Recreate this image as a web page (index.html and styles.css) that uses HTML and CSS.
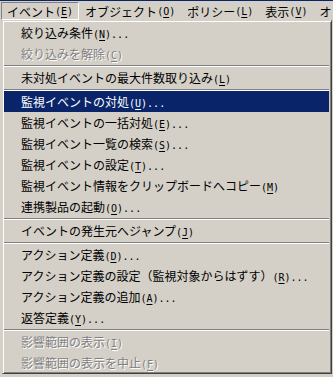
FILE: index.html
```html
<!DOCTYPE html>
<html lang="ja">
<head>
    <meta charset="UTF-8">
    <title>イベント</title>
    <link rel="stylesheet" href="styles.css">
</head>
<body>
    <div class="menubar">
        <span class="top-item pressed">イベント<span class="k">(<u>E</u>)</span></span>
        <span class="top-item">オブジェクト<span class="k">(<u>O</u>)</span></span>
        <span class="top-item">ポリシー<span class="k">(<u>L</u>)</span></span>
        <span class="top-item">表示<span class="k">(<u>V</u>)</span></span>
        <span class="top-item">オ</span>
    </div>

    <div class="dropdown">
        <div class="item">絞り込み条件<span class="k">(<u>N</u>)...</span></div>
        <div class="item disabled">絞り込みを解除<span class="k">(<u>C</u>)</span></div>
        <div class="sep"></div>
        <div class="item">未対処イベントの最大件数取り込み<span class="k">(<u>L</u>)</span></div>
        <div class="sep"></div>
        <div class="item active">監視イベントの対処<span class="k">(<u>U</u>)...</span></div>
        <div class="item">監視イベントの一括対処<span class="k">(<u>E</u>)...</span></div>
        <div class="item">監視イベント一覧の検索<span class="k">(<u>S</u>)...</span></div>
        <div class="item">監視イベントの設定<span class="k">(<u>T</u>)...</span></div>
        <div class="item">監視イベント情報をクリップボードへコピー<span class="k">(<u>M</u>)</span></div>
        <div class="item">連携製品の起動<span class="k">(<u>O</u>)...</span></div>
        <div class="sep"></div>
        <div class="item">イベントの発生元へジャンプ<span class="k">(<u>J</u>)</span></div>
        <div class="sep"></div>
        <div class="item">アクション定義<span class="k">(<u>D</u>)...</span></div>
        <div class="item">アクション定義の設定（監視対象からはずす）<span class="k">(<u>R</u>)...</span></div>
        <div class="item">アクション定義の追加<span class="k">(<u>A</u>)...</span></div>
        <div class="item">返答定義<span class="k">(<u>Y</u>)...</span></div>
        <div class="sep"></div>
        <div class="item disabled">影響範囲の表示<span class="k">(<u>I</u>)</span></div>
        <div class="item disabled">影響範囲の表示を中止<span class="k">(<u>F</u>)</span></div>
    </div>
</body>
</html>
```

FILE: styles.css
```css
body {
    margin: 0;
    background-color: #d4d0c8;
    font-family: "Noto Sans CJK JP", sans-serif;
    font-size: 12px;
    color: #000;
    width: 333px;
    height: 377px;
    overflow: hidden;
}
.k {
    font-family: "DejaVu Sans Mono", monospace;
    font-size: 10px;
}
.k u {
    text-underline-offset: 2px;
}
.menubar {
    display: flex;
    height: 20px;
    padding: 1px 0 0 1px;
    box-sizing: border-box;
    white-space: nowrap;
    border-top: 1px solid #0a246a;
}
.top-item {
    display: flex;
    align-items: center;
    height: 16px;
    padding: 0 5px;
    border: 1px solid transparent;
}
.top-item.pressed {
    border-color: #808080 #fff #fff #808080;
}
.dropdown {
    margin-left: 2px;
    width: 330px;
    box-sizing: border-box;
    border: 1px solid;
    border-color: #d4d0c8 #404040 #404040 #d4d0c8;
    box-shadow: inset 1px 1px #fff, inset -1px -1px #808080;
    padding: 1px 2px 0 1px;
}
.item {
    height: 21px;
    line-height: 21px;
    padding-left: 17px;
    white-space: nowrap;
}
.item.active {
    background-color: #0a246a;
    color: #fff;
}
.item.disabled {
    color: #808080;
    text-shadow: 1px 1px 0 #fff;
}
.sep {
    height: 0;
    margin: 1px 0 0;
    border-top: 1px solid #808080;
    border-bottom: 1px solid #fff;
}
```
